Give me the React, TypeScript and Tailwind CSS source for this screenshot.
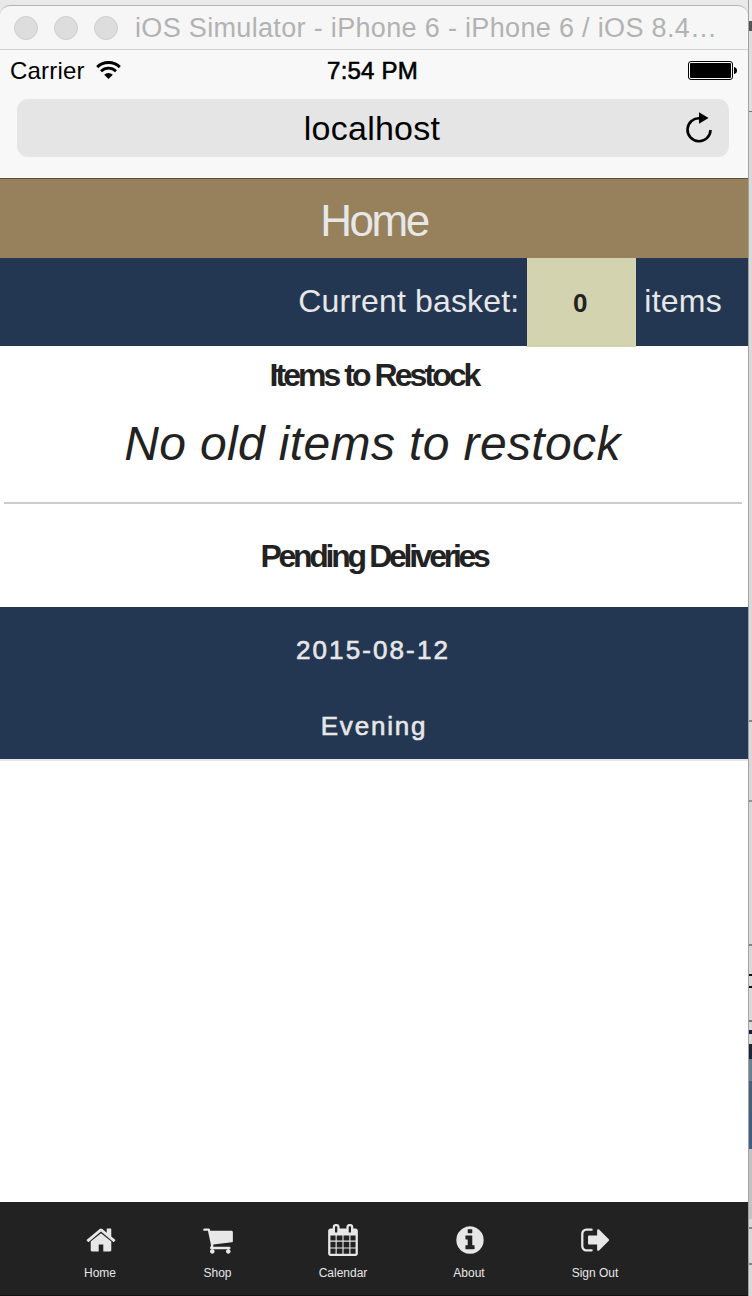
import React from "react";

const navItems = [
  {
    label: "Home",
    width: "w-[118px]",
    path: "M1472 992v480q0 26-19 45t-45 19h-384v-384h-256v384h-384q-26 0-45-19t-19-45v-480q0-1 .5-3t.5-3l575-474 575 474q1 2 1 6zm223-69l-62 74q-8 9-21 11h-3q-13 0-21-7l-692-577-692 577q-12 8-24 7-13-2-21-11l-62-74q-8-10-7-23.5t11-21.5l719-599q32-26 76-26t76 26l244 204v-195q0-14 9-23t23-9h192q14 0 23 9t9 23v408l219 182q10 8 11 21.5t-7 23.5z",
  },
  {
    label: "Shop",
    width: "w-[117px]",
    path: "M704 1536q0 52-38 90t-90 38-90-38-38-90 38-90 90-38 90 38 38 90zm896 0q0 52-38 90t-90 38-90-38-38-90 38-90 90-38 90 38 38 90zm128-1088v512q0 24-16.5 42.5t-40.5 21.5l-1044 122q13 60 13 70 0 16-24 64h920q26 0 45 19t19 45-19 45-45 19h-1024q-26 0-45-19t-19-45q0-11 8-31.5t16-36 21.5-40 15.5-29.5l-177-823h-204q-26 0-45-19t-19-45 19-45 45-19h256q16 0 28.5 6.5t19.5 15.5 13 24.5 8 26 5.5 29.5 4.5 26h1201q26 0 45 19t19 45z",
  },
  {
    label: "Calendar",
    width: "w-[134px]",
    path: "M192 1664h288v-288h-288v288zm352 0h320v-288h-320v288zm-352-352h288v-320h-288v320zm352 0h320v-320h-320v320zm-352-384h288v-288h-288v288zm736 736h320v-288h-320v288zm-384-736h320v-288h-320v288zm768 736h288v-288h-288v288zm-384-352h320v-320h-320v320zm-352-864v-288q0-13-9.5-22.5t-22.5-9.5h-64q-13 0-22.5 9.5t-9.5 22.5v288q0 13 9.5 22.5t22.5 9.5h64q13 0 22.5-9.5t9.5-22.5zm736 864h288v-320h-288v320zm-384-384h320v-288h-320v288zm384 0h288v-288h-288v288zm32-480v-288q0-13-9.5-22.5t-22.5-9.5h-64q-13 0-22.5 9.5t-9.5 22.5v288q0 13 9.5 22.5t22.5 9.5h64q13 0 22.5-9.5t9.5-22.5zm384-64v1280q0 52-38 90t-90 38h-1408q-52 0-90-38t-38-90v-1280q0-52 38-90t90-38h128v-96q0-66 47-113t113-47h64q66 0 113 47t47 113v96h384v-96q0-66 47-113t113-47h64q66 0 113 47t47 113v96h128q52 0 90 38t38 90z",
  },
  {
    label: "About",
    width: "w-[118px]",
    path: "M1152 1376v-160q0-14-9-23t-23-9h-96v-512q0-14-9-23t-23-9h-320q-14 0-23 9t-9 23v160q0 14 9 23t23 9h96v320h-96q-14 0-23 9t-9 23v160q0 14 9 23t23 9h448q14 0 23-9t9-23zm-128-896v-160q0-14-9-23t-23-9h-192q-14 0-23 9t-9 23v160q0 14 9 23t23 9h192q14 0 23-9t9-23zm640 416q0 209-103 385.5t-279.5 279.5-385.5 103-385.5-103-279.5-279.5-103-385.5 103-385.5 279.5-279.5 385.5-103 385.5 103 279.5 279.5 103 385.5z",
  },
  {
    label: "Sign Out",
    width: "w-[134px]",
    path: "M704 1440q0 4 1 20t.5 26.5-3 23.5-10 19.5-20.5 6.5h-320q-119 0-203.5-84.5t-84.5-203.5v-704q0-119 84.5-203.5t203.5-84.5h320q13 0 22.5 9.5t9.5 22.5q0 4 1 20t.5 26.5-3 23.5-10 19.5-20.5 6.5h-320q-66 0-113 47t-47 113v704q0 66 47 113t113 47h312l11.5 1 11.5 3 8 5.5 7 9 2 13.5zm928-544q0 26-19 45l-544 544q-19 19-45 19t-45-19-19-45v-288h-448q-26 0-45-19t-19-45v-384q0-26 19-45t45-19h448v-288q0-26 19-45t45-19 45 19l544 544q19 19 19 45z",
  },
];

function TitleBar() {
  return (
    <div className="flex h-[45px] shrink-0 items-center rounded-t-[10px] border-t border-b border-t-[#b4b4b4] border-b-[#cfcfcf] bg-[#f6f6f6] pl-[14px]">
      <div className="flex gap-4">
        {[0, 1, 2].map((i) => (
          <span key={i} className="size-6 rounded-full border border-[#cfcfcf] bg-[#dddddd]" />
        ))}
      </div>
      <span className="ml-[17px] pt-px whitespace-nowrap text-[27px] leading-[40px] tracking-[0.33px] text-[#b2b2b2]">
        iOS Simulator - iPhone 6 - iPhone 6 / iOS 8.4…
      </span>
    </div>
  );
}

function StatusBar() {
  return (
    <div className="grid h-[41px] grid-cols-[1fr_auto_1fr] items-center pl-[10px] pr-[11px] text-[24px] leading-[40px] text-black">
      <div className="flex items-center gap-[11px]">
        <span className="tracking-[0.2px]">Carrier</span>
        <svg className="-mt-[2px]" width="25" height="18" viewBox="0 0 25 18" fill="none" stroke="#000">
          <path d="M1.2 6.1a16.2 16.2 0 0 1 22.6 0" strokeWidth="3" />
          <path d="M5 10.2a10.9 10.9 0 0 1 15 0" strokeWidth="2.8" />
          <path d="M8.2 13.7a6.2 6.2 0 0 1 8.6 0L12.5 18z" fill="#000" stroke="none" />
        </svg>
      </div>
      <span className="mr-[2px] [-webkit-text-stroke:0.6px_#000] tracking-[0.2px]">7:54 PM</span>
      <svg className="justify-self-end" width="49" height="19" viewBox="0 0 49 19">
        <rect x="0.5" y="0.5" width="44" height="18" rx="2.5" fill="none" stroke="#000" />
        <rect x="2" y="2" width="41" height="15" rx="1" />
        <path d="M46 6q3 .5 3 3.5t-3 3.5z" />
      </svg>
    </div>
  );
}

function AddressBar() {
  return (
    <div className="mr-[19px] ml-[17px] mt-[8px] grid h-[58px] grid-cols-[1fr_auto_1fr] items-center rounded-[11px] bg-[#e5e5e5] pr-[16px] pl-[14px] text-black">
      <span />
      <span className="text-[34px] leading-[56px] tracking-[0.25px]">localhost</span>
      <svg className="justify-self-end" width="28" height="32" viewBox="0 0 28 32">
        <path d="M15 6.3A11.5 11.5 0 1 0 25.5 18" fill="none" stroke="#000" strokeWidth="2.6" />
        <path d="M14 .3v11.4L23.5 6z" />
      </svg>
    </div>
  );
}

function Backdrop() {
  return (
    <div className="flex w-1 shrink-0 flex-col border-l border-[#a2a2a2] bg-[#d9d9d9]">
      <div className="h-[21px] bg-[#ededed]" />
      <div className="h-[10px] bg-[#555555]" />
      <div className="h-[80px] bg-[#dedede]" />
      <div className="h-px bg-[#777777]" />
      <div className="h-[608px]" />
      <div className="h-[2px] bg-[#858585]" />
      <div className="h-[78px]" />
      <div className="h-[2px] bg-[#929292]" />
      <div className="h-[142px]" />
      <div className="h-[2px] bg-[#858585]" />
      <div className="h-[28px]" />
      <div className="h-[2px] bg-[#111111]" />
      <div className="h-[10px]" />
      <div className="h-[2px] bg-[#111111]" />
      <div className="h-[32px]" />
      <div className="h-[2px] bg-[#777777]" />
      <div className="h-[8px]" />
      <div className="h-[4px] bg-[#18202d]" />
      <div className="h-[10px]" />
      <div className="h-[15px] bg-[#1c2736]" />
      <div className="h-[22px] bg-[#66828f]" />
      <div className="h-[30px] bg-[#465f7d]" />
      <div className="h-[38px] bg-[#405e83]" />
      <div className="h-[70px] bg-[#c3c3c3]" />
      <div className="h-[8px]" />
      <div className="h-[2px] bg-[#858585]" />
      <div className="h-[34px]" />
      <div className="h-[2px] bg-[#858585]" />
    </div>
  );
}

export default function App() {
  return (
    <div className="flex h-[1296px] w-[752px] overflow-hidden bg-[#e9e9e9] font-['Liberation_Sans',Arial,sans-serif]">
      <div className="flex w-[748px] flex-col pt-[5px]">
        <TitleBar />
        <header className="h-[129px] shrink-0 border-b border-[#5e5137] bg-[#f8f8f8]">
          <StatusBar />
          <AddressBar />
        </header>

        <h1 className="h-[79px] shrink-0 bg-[#96815c] pt-[12px] text-center text-[44px] leading-[60px] tracking-[-2.5px] text-[#e7e7e7]">
          Home
        </h1>

        <div className="z-10 flex h-[88px] shrink-0 items-start justify-end bg-[#243752] pr-[26px] text-[32px] leading-[86px] text-[#e7e7e7]">
          <span className="tracking-[0.15px]">Current basket:</span>
          <span className="z-10 ml-[8px] h-[89px] w-[109px] bg-[#d3d3af] pr-[3px] text-center text-[26px] leading-[91px] font-bold text-[#222222]">
            0
          </span>
          <span className="ml-[8px] tracking-[0.25px]">items</span>
        </div>

        <main className="flex grow flex-col bg-white text-center text-[#222222]">
          <h2 className="pt-[9px] text-[32px] leading-[40px] font-bold tracking-[-2.95px]">Items to Restock</h2>
          <p className="pt-[19px] pr-[3px] text-[48px] leading-[60px] tracking-[0.37px] italic">No old items to restock</p>
          <hr className="mx-1 mt-[28px] mr-[6px] border-t-2 border-[#cccccc]" />
          <h2 className="pt-[32px] text-[32px] leading-[40px] font-bold tracking-[-3.3px]">Pending Deliveries</h2>
          <div className="mt-[31px] h-[154px] border-b-2 border-[#e7e7e7] bg-[#243752] pt-[25px] text-[26px] leading-[36px] text-[#e7e7e7] [-webkit-text-stroke:0.6px_#e7e7e7]">
            <p className="pr-[2px] tracking-[2.1px]">2015-08-12</p>
            <p className="pt-[40px] tracking-[1.8px]">Evening</p>
          </div>
        </main>

        <nav className="flex h-[94px] shrink-0 border-b border-[#111111] bg-[#222222] pl-[41px] text-[#e7e7e7]">
          {navItems.map((item) => (
            <a key={item.label} className={`flex flex-col items-center pt-[22px] ${item.width}`}>
              <svg className={item.label === "Calendar" ? "-ml-px size-8" : "ml-px size-8"} viewBox="0 0 1792 1792" fill="currentColor">
                <path d={item.path} />
              </svg>
              <span className="mt-[8px] text-[12px] leading-[18px]">{item.label}</span>
            </a>
          ))}
        </nav>
      </div>
      <Backdrop />
    </div>
  );
}
